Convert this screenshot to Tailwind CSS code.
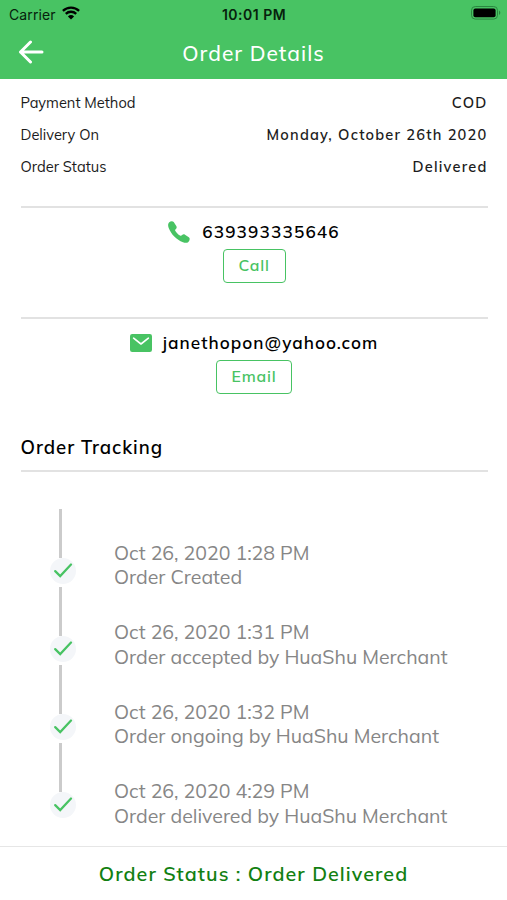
<!DOCTYPE html>
<html lang="en">
<head>
    <meta charset="UTF-8">
    <meta name="viewport" content="width=device-width, initial-scale=1.0">
    <title>Order Details</title>
    <script src="https://cdn.jsdelivr.net/npm/@tailwindcss/browser@4"></script>
</head>
<body class="bg-white h-[900px] flex flex-col overflow-hidden font-[Mulish,Muli,Lato,sans-serif] text-[#1c1c1c]">
    <!-- Header -->
    <header class="h-[79px] shrink-0 bg-[#48c363]">
        <div class="h-7 grid grid-cols-3 items-center pl-[9px] pr-[6px] font-[Inter,sans-serif] text-[#06210c]">
            <div class="flex items-center gap-[6px] text-[14px]">
                <span class="tracking-[0.1px]">Carrier</span>
                <svg class="w-[18px] h-[14px] -mt-[2px]" viewBox="0 0 18 14" fill="none" stroke="#000" stroke-width="2.3">
                    <path d="M0.9 4.9a11.6 11.6 0 0 1 16.2 0"/>
                    <path d="M3.8 7.9a7.4 7.4 0 0 1 10.4 0"/>
                    <path d="M9 13.6L5.9 10.4a4.5 4.5 0 0 1 6.2 0z" fill="#000" stroke="none"/>
                </svg>
            </div>
            <span class="-ml-[2px] text-center text-[14px] font-semibold tracking-[0.5px] whitespace-nowrap">10:01 PM</span>
            <svg class="justify-self-end w-[30px] h-[14px] -mt-[2px]" viewBox="0 0 30 14">
                <rect x="0.5" y="0.5" width="26" height="12.6" rx="3.8" fill="none" stroke="#2a8740"/>
                <rect x="2.4" y="2.4" width="22.2" height="8.8" rx="2" fill="#000"/>
                <path d="M28 4.6c1.8 .8 1.8 3.6 0 4.4z" fill="#2a8740"/>
            </svg>
        </div>
        <div class="h-[50px] grid grid-cols-[60px_1fr_60px] items-center">
            <svg class="ml-[18px] -mt-[2px] w-[26px] h-[24px]" viewBox="0 0 26 24" fill="none" stroke="#fff" stroke-width="3" stroke-linecap="round" stroke-linejoin="round">
                <path d="M24 12H2.5M12.5 2L2.5 12l10 10"/>
            </svg>
            <h1 class="pt-px text-center text-white text-[21px] font-medium tracking-[1px]">Order Details</h1>
        </div>
    </header>

    <main class="flex-1 pl-[20.5px] pr-[19.5px] pt-2">
        <!-- Order info -->
        <dl class="text-[14.6px] leading-8">
            <div class="flex justify-between">
                <dt>Payment Method</dt>
                <dd class="font-[560] tracking-[1.2px]">COD</dd>
            </div>
            <div class="flex justify-between">
                <dt>Delivery On</dt>
                <dd class="font-[560] tracking-[1.2px]">Monday, October 26th 2020</dd>
            </div>
            <div class="flex justify-between">
                <dt>Order Status</dt>
                <dd class="font-[560] tracking-[1.2px]">Delivered</dd>
            </div>
        </dl>

        <!-- Phone -->
        <section class="mt-[22.5px] h-[111px] border-t-2 border-[#e2e2e2] flex flex-col items-center pt-3">
            <div class="flex items-center h-6 gap-3">
                <svg class="w-[22px] h-[22px]" viewBox="0 0 22 22" fill="#48c363">
                    <path d="M1 1.5C2.5 .1 4.6-.2 5.7 1.1L8.3 5c.7 1.1.4 2.1-.4 2.9-.8.7-1 1.2-.5 2.1 1.1 1.9 2.7 3.5 4.6 4.6.9.5 1.4.3 2.1-.5.8-.8 1.8-1.1 2.9-.4l3.8 2.5c1.4 1.1 1.1 3.2-.4 4.7-1.200 1.200-3.300 1.200-5.400.4C8.400 18.800 3.200 13.600.7 7.100-.1 5-.2 2.700 1 1.500z"/>
                </svg>
                <span class="text-[17.2px] font-[560] tracking-[1.15px] text-black">639393335646</span>
            </div>
            <button class="mt-[5px] w-[63px] h-[34px] border-[1.5px] border-[#48c363] rounded-[4px] text-[15.8px] font-[560] tracking-[0.8px] text-[#48c363]">Call</button>
        </section>

        <!-- Email -->
        <section class="h-[116px] border-t-2 border-[#e2e2e2] flex flex-col items-center pt-3">
            <div class="flex items-center h-6 gap-[11px]">
                <svg class="w-[22px] h-[18px]" viewBox="0 0 22 18">
                    <rect width="22" height="18" rx="2.2" fill="#48c363"/>
                    <path d="M3.6 4.2L11 10l7.4-5.8" fill="none" stroke="#fff" stroke-width="1.6" stroke-linecap="round" stroke-linejoin="round"/>
                </svg>
                <span class="text-[17.2px] font-[560] tracking-[1.05px] text-black">janethopon@yahoo.com</span>
            </div>
            <button class="mt-[5px] w-[76px] h-[34px] border-[1.5px] border-[#48c363] rounded-[4px] text-[15.8px] font-[560] tracking-[0.8px] text-[#48c363]">Email</button>
        </section>

        <!-- Tracking -->
        <h2 class="h-[39px] pt-[2px] border-b-2 border-[#e2e2e2] text-[18.6px] leading-[25px] font-[560] tracking-[0.95px] text-black">Order Tracking</h2>
        <div class="flex pt-[37px]">
            <div class="w-[93.5px] shrink-0 pl-[29.5px]">
                <div class="h-[78px]">
                    <div class="ml-[9px] w-[3px] h-[49px] bg-[#cbcbcb]"></div>
                    <div class="w-[26px] h-[26px] rounded-full bg-[#f4f6f9] flex items-center justify-center">
                        <svg class="w-5 h-4" viewBox="0 0 20 16" fill="none" stroke="#48c363" stroke-width="2.2" stroke-linecap="round"><path d="M2.2 8.1l5 5L18 1.5"/></svg>
                    </div>
                </div>
                <div class="h-[78px]">
                    <div class="ml-[9px] w-[3px] h-[49px] bg-[#cbcbcb]"></div>
                    <div class="w-[26px] h-[26px] rounded-full bg-[#f4f6f9] flex items-center justify-center">
                        <svg class="w-5 h-4" viewBox="0 0 20 16" fill="none" stroke="#48c363" stroke-width="2.2" stroke-linecap="round"><path d="M2.2 8.1l5 5L18 1.5"/></svg>
                    </div>
                </div>
                <div class="h-[78px]">
                    <div class="ml-[9px] w-[3px] h-[49px] bg-[#cbcbcb]"></div>
                    <div class="w-[26px] h-[26px] rounded-full bg-[#f4f6f9] flex items-center justify-center">
                        <svg class="w-5 h-4" viewBox="0 0 20 16" fill="none" stroke="#48c363" stroke-width="2.2" stroke-linecap="round"><path d="M2.2 8.1l5 5L18 1.5"/></svg>
                    </div>
                </div>
                <div class="h-[78px]">
                    <div class="ml-[9px] w-[3px] h-[49px] bg-[#cbcbcb]"></div>
                    <div class="w-[26px] h-[26px] rounded-full bg-[#f4f6f9] flex items-center justify-center">
                        <svg class="w-5 h-4" viewBox="0 0 20 16" fill="none" stroke="#48c363" stroke-width="2.2" stroke-linecap="round"><path d="M2.2 8.1l5 5L18 1.5"/></svg>
                    </div>
                </div>
            </div>
            <div class="pt-8 flex flex-col text-[19.5px] leading-[24.5px] text-[#868686] whitespace-nowrap">
                <div class="h-[79.5px]">
                    <p>Oct 26, 2020 1:28 PM</p>
                    <p>Order Created</p>
                </div>
                <div class="h-[79.5px]">
                    <p>Oct 26, 2020 1:31 PM</p>
                    <p>Order accepted by HuaShu Merchant</p>
                </div>
                <div class="h-[79.5px]">
                    <p>Oct 26, 2020 1:32 PM</p>
                    <p>Order ongoing by HuaShu Merchant</p>
                </div>
                <div>
                    <p>Oct 26, 2020 4:29 PM</p>
                    <p>Order delivered by HuaShu Merchant</p>
                </div>
            </div>
        </div>
    </main>

    <footer class="h-[54px] shrink-0 border-t border-[#e6e6e6] flex items-center justify-center">
        <p class="text-[19.7px] font-[560] tracking-[1.05px] text-[#128012]">Order Status : Order Delivered</p>
    </footer>
</body>
</html>
